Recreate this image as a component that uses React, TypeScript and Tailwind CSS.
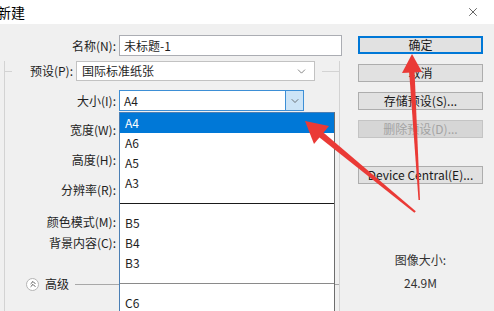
import { ChevronDown, X, ChevronsUp } from "lucide-react";

const listItems = [
  { label: "A4", active: true },
  { label: "A6" },
  { label: "A5" },
  { label: "A3" },
  { sep: "bg-[#1a1a1a]" },
  { label: "B5" },
  { label: "B4" },
  { label: "B3" },
  { sep: "bg-[#8a8a8a]" },
  { label: "C6" },
];

function Btn({
  children,
  primary,
  disabled,
  className = "",
}: {
  children: React.ReactNode;
  primary?: boolean;
  disabled?: boolean;
  className?: string;
}) {
  let tone = "bg-[#e1e1e1] border border-[#adadad] text-[#1a1a1a]";
  if (primary) tone = "bg-[#e1e1e1] border-2 border-[#0078d7] text-[#1a1a1a]";
  if (disabled) tone = "bg-[#d6d6d6] border border-[#c4c4c4] text-[#a3a3a3]";
  return (
    <div
      className={`h-[18px] w-[125px] flex items-center justify-center text-[12px] leading-none ${tone} ${className}`}
    >
      {children}
    </div>
  );
}

export default function App() {
  return (
    <div className="relative w-[494px] h-[311px] overflow-hidden bg-[#f0f0f0] font-['Noto_Sans_CJK_SC',sans-serif] text-[12px] text-[#1e1e1e]">
      {/* Title bar */}
      <div className="h-[24px] bg-white flex items-center justify-between">
        <span className="-ml-[3px] text-[14px] text-black">新建</span>
        <X className="mr-[14px] w-[14px] h-[14px] text-[#222]" strokeWidth={1.2} />
      </div>

      <div className="flex">
        {/* Left side */}
        <div className="w-[345px]">
          {/* Name */}
          <div className="mt-[11px] h-[21px] flex items-center">
            <span className="w-[119px] text-right pr-[3px]">名称(N):</span>
            <div className="w-[223px] h-[21px] bg-white border border-[#abadb3] flex items-center pl-[4px]">
              未标题-1
            </div>
          </div>

          {/* Group box */}
          <div className="mt-[15px] ml-[4px] w-[336px] h-[260px] border-l border-r border-[#d3d3d3]">
            <div className="-mt-[10px] h-[20px] flex items-center">
              <div className="w-[7px] h-px bg-[#d3d3d3]" />
              <span className="w-[64px] text-right pr-[3px]">预设(P):</span>
              <div className="w-[239px] h-[20px] bg-white border border-[#c2c2c2] flex items-center justify-between pl-[5px] pr-[6px]">
                <span>国际标准纸张</span>
                <ChevronDown className="w-[13px] h-[13px] text-[#555]" strokeWidth={1.3} />
              </div>
              <div className="w-[7px]" />
              <div className="w-[17px] h-px bg-[#d3d3d3]" />
            </div>

            {/* Size */}
            <div className="mt-[9px] h-[21px] flex items-center">
              <span className="w-[114px] text-right pr-[3px]">大小(I):</span>
              <div className="w-[185px] h-[21px] bg-white border border-[#3d8fd6] flex items-center justify-between pl-[4px]">
                <span>A4</span>
                <div className="w-[18px] h-full bg-[#cce4f7] border-l border-[#3d8fd6] flex items-center justify-center">
                  <ChevronDown className="w-[12px] h-[12px] text-[#444]" strokeWidth={1.4} />
                </div>
              </div>
            </div>

            <div className="mt-[9px] h-[20px] flex items-center">
              <span className="w-[114px] text-right pr-[3px]">宽度(W):</span>
            </div>
            <div className="mt-[10px] h-[20px] flex items-center">
              <span className="w-[114px] text-right pr-[3px]">高度(H):</span>
            </div>
            <div className="mt-[10px] h-[20px] flex items-center">
              <span className="w-[114px] text-right pr-[3px]">分辨率(R):</span>
            </div>
            <div className="mt-[12px] h-[20px] flex items-center">
              <span className="w-[114px] text-right pr-[3px]">颜色模式(M):</span>
            </div>
            <div className="mt-[1px] h-[20px] flex items-center">
              <span className="w-[114px] text-right pr-[3px]">背景内容(C):</span>
            </div>

            {/* Advanced */}
            <div className="mt-[21px] h-[20px] flex items-center pl-[21px]">
              <div className="w-[13px] h-[13px] rounded-full bg-white border border-[#b5b5b5] flex items-center justify-center">
                <ChevronsUp className="w-[10px] h-[10px] text-[#333]" strokeWidth={2} />
              </div>
              <span className="ml-[6px]">高级</span>
              <div className="ml-[6px] flex-1 h-px bg-[#a8a8a8]" />
            </div>
          </div>
        </div>

        {/* Right side */}
        <div className="ml-[13px] mt-[12px] flex flex-col">
          <Btn primary>确定</Btn>
          <Btn className="mt-[10px]">取消</Btn>
          <Btn className="mt-[10px]">存储预设(S)...</Btn>
          <Btn className="mt-[10px]" disabled>
            删除预设(D)...
          </Btn>
          <Btn className="mt-[28px]">Device Central(E)...</Btn>
          <div className="mt-[68px] h-[16px] flex items-center justify-center text-[#333]">
            图像大小:
          </div>
          <div className="mt-[7px] h-[16px] flex items-center justify-center text-[#333]">
            24.9M
          </div>
        </div>
      </div>

      {/* Open size list */}
      <div className="absolute left-[119px] top-[112px] w-[216px] h-[210px] bg-white border border-[#4a7fb5] border-r-[#6d6d6d]">
        {listItems.map((it, i) =>
          it.sep ? (
            <div key={i} className="h-[20px] flex items-center">
              <div className={`w-full h-px ${it.sep}`} />
            </div>
          ) : (
            <div
              key={i}
              className={`h-[20px] flex items-center pl-[5px] ${
                it.active ? "bg-[#0078d7] text-white" : "text-[#1e1e1e]"
              }`}
            >
              {it.label}
            </div>
          )
        )}
      </div>

      {/* Red annotation arrows */}
      <svg className="absolute inset-0 pointer-events-none" width="494" height="311" viewBox="0 0 494 311">
        <polygon points="409,70 414.5,70 420,200 418.5,200" fill="#ea3a36" />
        <polygon points="412,54 402,73 422,72" fill="#ea3a36" />
        <polygon points="317,135.5 321,130.5 415.8,211.2 414.4,212.8" fill="#ea3a36" />
        <polygon points="305,121 329,126 314,144" fill="#ea3a36" />
      </svg>
    </div>
  );
}
